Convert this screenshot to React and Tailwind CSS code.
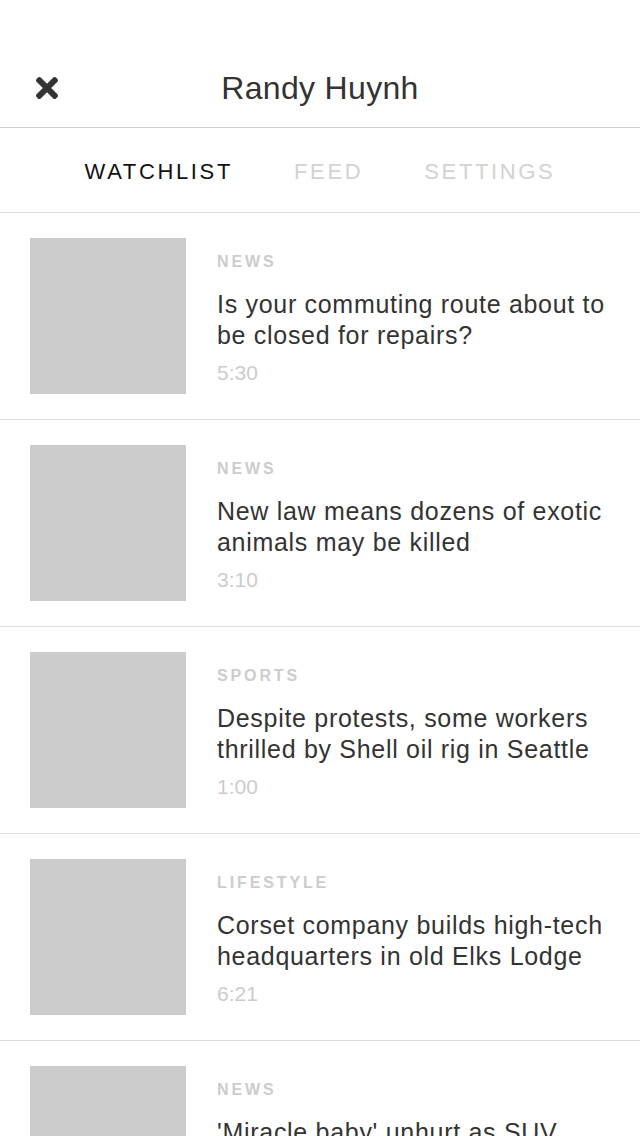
import { FaTimes } from 'react-icons/fa'

const stories = [
  { category: 'News', title: 'Is your commuting route about to be closed for repairs?', time: '5:30' },
  { category: 'News', title: 'New law means dozens of exotic animals may be killed', time: '3:10' },
  { category: 'Sports', title: 'Despite protests, some workers thrilled by Shell oil rig in Seattle', time: '1:00' },
  { category: 'Lifestyle', title: 'Corset company builds high-tech headquarters in old Elks Lodge', time: '6:21' },
  { category: 'News', title: "'Miracle baby' unhurt as SUV crashes into family home", time: '2:45' },
]

const tabs = ['Watchlist', 'Feed', 'Settings']

export default function App() {
  return (
    <div className="h-[1136px] overflow-hidden bg-white font-['Liberation_Sans',Arial,sans-serif] text-[#333]">
      <header className="border-b border-[#cfcfcf] px-[30px] pt-[64px] pb-[15px]">
        <div className="relative flex h-[48px] items-center justify-center">
          <button className="absolute left-[1px] top-1/2 -translate-y-1/2 text-[#333]">
            <FaTimes size={32} />
          </button>
          <h1 className="text-[32px] leading-none tracking-[0.01em] text-[#333]">Randy Huynh</h1>
        </div>
      </header>

      <nav className="flex h-[85px] items-center justify-center gap-[61px] border-b border-[#dcdcdc] pt-[3px]">
        {tabs.map((tab, i) => (
          <span
            key={tab}
            className={
              'text-[22px] uppercase leading-none tracking-[0.12em] ' +
              (i === 0 ? 'text-[#111]' : 'text-[#d2d2d2]')
            }
          >
            {tab}
          </span>
        ))}
      </nav>

      <ul>
        {stories.map((story, i) => (
          <li key={i} className="flex gap-[31px] border-b border-[#dedede] px-[30px] py-[25px]">
            <div className="h-[156px] w-[156px] shrink-0 bg-[#cccccc]" />
            <div className="min-w-0 flex-1 pt-[14px]">
              <p className="text-[16px] font-bold uppercase leading-[20px] tracking-[0.18em] text-[#cccccc]">
                {story.category}
              </p>
              <h2 className="mt-[17px] text-[25px] leading-[31px] tracking-[0.7px] text-[#333]">{story.title}</h2>
              <p className="mt-[10px] text-[21px] leading-[24px] text-[#cccccc]">{story.time}</p>
            </div>
          </li>
        ))}
      </ul>
    </div>
  )
}
